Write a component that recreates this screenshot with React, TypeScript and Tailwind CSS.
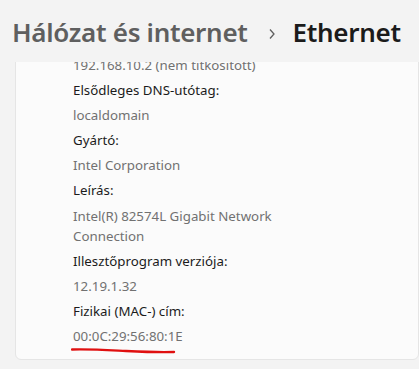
import React from 'react';

type Row = { label: string; value: string; mark?: boolean };

const rows: Row[] = [
  { label: "Elsődleges DNS-utótag:", value: "localdomain" },
  { label: "Gyártó:", value: "Intel Corporation" },
  { label: "Leírás:", value: "Intel(R) 82574L Gigabit Network Connection" },
  { label: "Illesztőprogram verziója:", value: "12.19.1.32" },
  { label: "Fizikai (MAC-) cím:", value: "00:0C:29:56:80:1E", mark: true },
];

const App = () => {
  return (
    <div className="w-[419px] h-[369px] bg-[#f3f3f3] flex flex-col overflow-hidden font-['Noto_Sans',sans-serif]">
      <div className="h-[62px] shrink-0 flex items-center pl-[12px] pt-[2px] whitespace-nowrap">
        <span className="text-[26px] leading-[36px] font-semibold text-[#5f5f5f] tracking-[-0.3px]">Hálózat és internet</span>
        <svg width="8" height="12" viewBox="0 0 8 12" className="shrink-0 ml-[20px] mr-[17px] mt-[3px]">
          <path d="M2 1.5 L6 6 L2 10.5" stroke="#5f5f5f" strokeWidth="1.3" fill="none" />
        </svg>
        <span className="text-[26px] leading-[36px] font-semibold text-[#1b1b1b] tracking-[-0.3px]">Ethernet</span>
      </div>
      <div className="flex-1 overflow-hidden pl-[15px]">
        <div className="-mt-[8px] bg-[#fbfbfb] border border-[#e5e5e5] rounded-b-[6px] pl-[57px] pb-[13px] text-[13.3px] leading-[20px] flex flex-col gap-[5.1px]">
          <div className="text-[#717171]">192.168.10.2 (nem titkosított)</div>
          {rows.map((r, i) => (
            <React.Fragment key={i}>
              <div className="text-[#1b1b1b]">{r.label}</div>
              <div className="text-[#717171] w-[205px] relative">
                {r.value}
                {r.mark && (
                  <svg width="106" height="10" viewBox="0 0 106 10" className="absolute left-[-2px] top-[21px]">
                    <path d="M1 2.5 C 20 2, 35 3, 55 4 S 90 5.5, 103 5" stroke="#e01010" strokeWidth="2.4" strokeLinecap="round" fill="none" />
                  </svg>
                )}
              </div>
            </React.Fragment>
          ))}
        </div>
      </div>
    </div>
  );
};

export default App;
